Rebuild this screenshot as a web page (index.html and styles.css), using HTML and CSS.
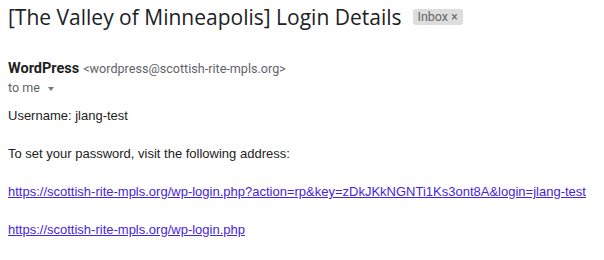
FILE: index.html
```html
<!DOCTYPE html>
<html lang="en">
<head>
  <meta charset="UTF-8" />
  <title>[The Valley of Minneapolis] Login Details</title>
  <link rel="stylesheet" href="styles.css">
</head>
<body>

  <header class="subject">
    <h1>[The Valley of Minneapolis] Login Details</h1>
    <span class="label">Inbox <span class="label-x">×</span></span>
  </header>

  <section class="sender">
    <div class="from">
      <span class="name">WordPress</span>
      <span class="address">&lt;wordpress@scottish-rite-mpls.org&gt;</span>
    </div>
    <div class="to">to me <span class="caret"></span></div>
  </section>

  <div class="message">
    Username: jlang-test<br><br>
    To set your password, visit the following address:<br><br>
    <a href="#">https://scottish-rite-mpls.org/wp-login.php?action=rp&amp;key=zDkJKkNGNTi1Ks3ont8A&amp;login=jlang-test</a><br><br>
    <a href="#">https://scottish-rite-mpls.org/wp-login.php</a>
  </div>

</body>
</html>
```

FILE: styles.css
```css
body {
  margin: 0;
  padding: 0 8px;
  background: #fff;
  color: #222;
  font-family: Roboto, "Liberation Sans", sans-serif;
}

.subject {
  display: flex;
  align-items: center;
  gap: 11px;
  height: 34px;
}

.subject h1 {
  margin: 0;
  font-family: "Open Sans", Roboto, sans-serif;
  font-size: 21px;
  font-weight: 400;
  color: #202124;
}

.label {
  background: #ddd;
  color: #666;
  font-size: 12.5px;
  padding: 1px 5px;
  border-radius: 3px;
  line-height: 14px;
}

.label-x {
  font-size: 12px;
}

.sender {
  margin-top: 24px;
}

.from {
  line-height: 20px;
}

.name {
  font-weight: 700;
  font-size: 14.5px;
  color: #1f1f1f;
}

.address {
  font-size: 12.6px;
  color: #5f6368;
}

.to {
  font-size: 12.5px;
  color: #5f6368;
  line-height: 18px;
  display: flex;
  align-items: center;
  gap: 8px;
}

.caret {
  width: 0;
  height: 0;
  border-left: 3.5px solid transparent;
  border-right: 3.5px solid transparent;
  border-top: 4px solid #777;
  margin-top: 1px;
}

.message {
  margin-top: 9px;
  font-family: "Liberation Sans", Arial, sans-serif;
  font-size: 13px;
  line-height: 19px;
  color: #222;
}

.message a {
  color: #4426d9;
}
```
